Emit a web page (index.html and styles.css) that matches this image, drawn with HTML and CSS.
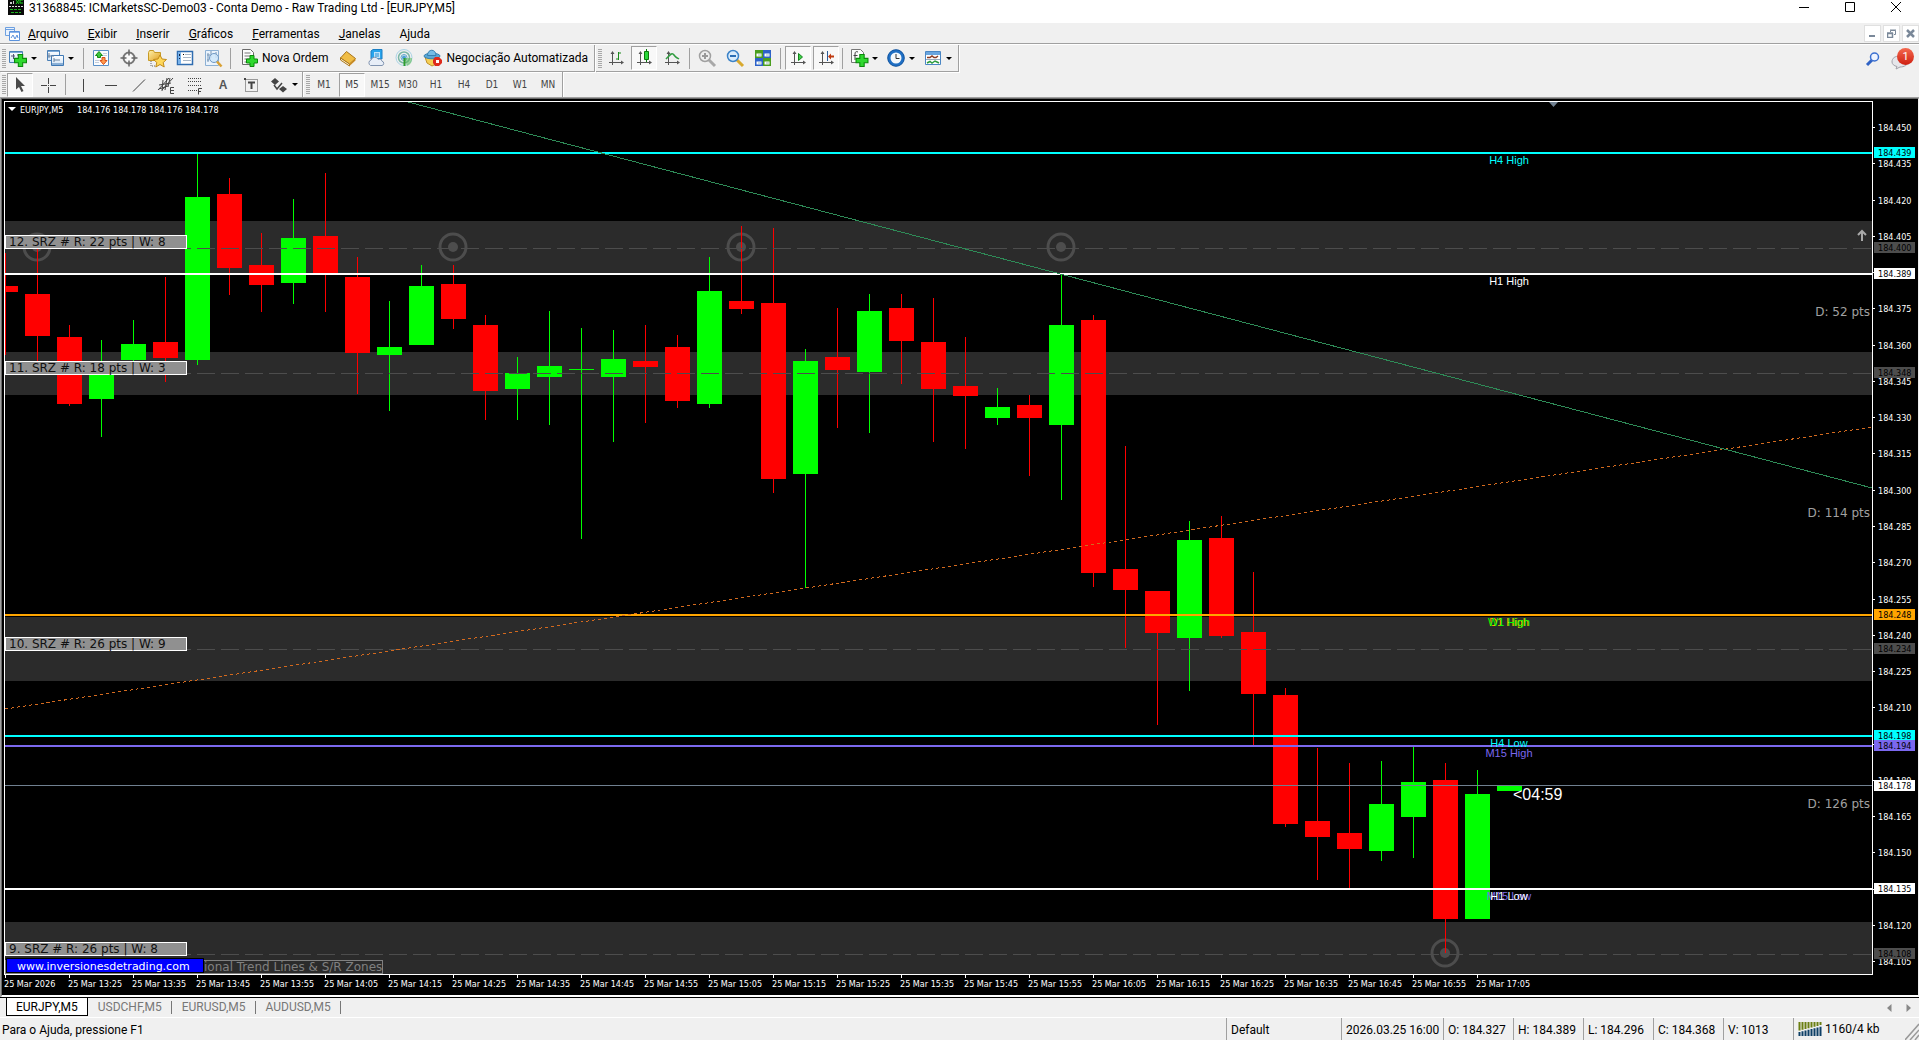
FILE: index.html
```html
<!DOCTYPE html>
<html lang="pt">
<head>
<meta charset="utf-8">
<title>31368845: ICMarketsSC-Demo03 - Conta Demo - Raw Trading Ltd - [EURJPY,M5]</title>
<link rel="stylesheet" href="styles.css">
</head>
<body>
<svg class="defs" width="0" height="0" aria-hidden="true">
  <symbol id="plus" viewBox="0 0 12 12"><path d="M4 .5h4V4h3.500v4H8v3.500H4V8H.5V4H4z" fill="#2fd82f" stroke="#0b8a0b"/></symbol>
  <symbol id="axes" viewBox="0 0 20 20"><path d="M6.500 4v13M3 14.500h14" stroke="#555" fill="none"/><path d="M4.500 6l2-3 2 3zM15 12.500l3 2-3 2z" fill="#555"/></symbol>
  <linearGradient id="win" x1="0" y1="0" x2="0" y2="1"><stop offset="0" stop-color="#fff"/><stop offset="1" stop-color="#cfe3f7"/></linearGradient>
  <linearGradient id="gold" x1="0" y1="0" x2="1" y2="1"><stop offset="0" stop-color="#fff0a8"/><stop offset="1" stop-color="#e0a020"/></linearGradient>
</svg>

<header class="titlebar">
  <svg class="app-icon" width="16" height="15" viewBox="0 0 16 15"><path fill="#0a0a0a" d="M0 0h16v15H0z"/><path d="M2 4V2h2v2zM5 4V1h1v3z" fill="#ccc"/><path d="M8 0l3 4M11 0L8 4M15 0h-3v3h3" stroke="#19d419" fill="none"/><path d="M1 6.500h14" stroke="#ddd" stroke-dasharray="2 1"/><path d="M2 9.500h12M3 12.500h10" stroke="#1fb51f" stroke-dasharray="3 1"/></svg>
  <span class="title">31368845: ICMarketsSC-Demo03 - Conta Demo - Raw Trading Ltd - [EURJPY,M5]</span>
  <div class="window-controls">
    <button aria-label="Minimizar"><svg width="12" height="12"><path d="M1 7.500h10" stroke="#000"/></svg></button>
    <button aria-label="Maximizar"><svg width="12" height="12"><path d="M1.500 2.500h9v9h-9z" fill="none" stroke="#000"/></svg></button>
    <button aria-label="Fechar"><svg width="12" height="12"><path d="M1 2l10 10M11 2L1 12" stroke="#000"/></svg></button>
  </div>
</header>

<nav class="menubar">
  <svg class="mdi-icon" width="15" height="14" viewBox="0 0 15 14"><path d="M.5.5h9v8h-9z" fill="#e9f2fd" stroke="#6ea0e0"/><path d="M1 2.500h8" stroke="#6ea0e0"/><path d="M4.500 4.500h10v9h-10z" fill="#fff" stroke="#5b92dc"/><path d="M5 5.500h9" stroke="#8db6ec"/><path d="M6 11l2-3 2 4 2-4 1 3" fill="none" stroke="#5b92dc"/></svg>
  <button><u>A</u>rquivo</button><button><u>E</u>xibir</button><button><u>I</u>nserir</button><button><u>G</u>ráficos</button><button><u>F</u>erramentas</button><button><u>J</u>anelas</button><button>Ajuda</button>
  <div class="mdi-controls">
    <button aria-label="Minimizar gráfico"><svg width="9" height="9"><path d="M1 6h6v2H1z" fill="#7a8899"/></svg></button>
    <button aria-label="Restaurar gráfico"><svg width="9" height="9"><path d="M3.500 3V1.500h5v4H7M3 1h6" fill="none" stroke="#7a8899"/><path d="M.5 4.500h5v4h-5zM0 4h6" fill="none" stroke="#7a8899" stroke-width="1.500"/></svg></button>
    <button aria-label="Fechar gráfico"><svg width="9" height="9"><path d="M1 1l7 7M8 1L1 8" stroke="#7a8899" stroke-width="2.500"/></svg></button>
  </div>
</nav>

<div class="toolbar">
  <div class="group">
    <span class="grip"></span>
    <button class="drop" aria-label="Novo gráfico"><svg width="20" height="20" viewBox="0 0 20 20"><path d="M1.500 3.500h13v11h-13z" fill="url(#win)" stroke="#4a7fb5"/><path d="M2 4.500h12" stroke="#7aa9d8"/><path d="M3 8h4M5.500 6v5M9 7h4" stroke="#557"/><use href="#plus" x="6" y="6" width="13" height="13"/></svg></button>
    <button class="drop" aria-label="Perfis"><svg width="20" height="20" viewBox="0 0 20 20"><path d="M2.500 2.500h12v10h-12z" fill="url(#win)" stroke="#4a7fb5"/><path d="M3 3.500h11" stroke="#7aa9d8"/><path d="M6.500 7.500h12v10h-12z" fill="url(#win)" stroke="#3f78b4"/><path d="M4 10V5M3 8h6M9 12h6M9 10v4" stroke="#68809c"/><path d="M7 16h11" stroke="#3f78b4"/></svg></button>
    <span class="sep"></span>
    <button aria-label="Observação do mercado"><svg width="20" height="20" viewBox="0 0 20 20"><path d="M2.500 2.500h15v15h-15z" fill="#fbfcfe" stroke="#5a90c8"/><path d="M8 3.500l3.500 4H9.500v2h-3v-2H4.500z" fill="#3cc63c" stroke="#128a12"/><path d="M12.500 16.500L9 12.500h2v-3h3v3h2z" fill="#ff9a4d" stroke="#d8501a"/><path d="M4 12.500h4M4 14.500h4M12 5.500h4M12 7.500h4" stroke="#c3cddb"/></svg></button>
    <button aria-label="Janela de dados"><svg width="20" height="20" viewBox="0 0 20 20"><circle cx="10" cy="10" r="5.500" fill="#fafafa" stroke="#777" stroke-width="2"/><path d="M10 1.500v6M10 12.500v6M1.500 10h6M12.500 10h6" stroke="#666" stroke-width="1.500"/></svg></button>
    <button aria-label="Navegador"><svg width="20" height="20" viewBox="0 0 20 20"><path d="M1.500 4.500l1-2h4l1 2h6v8h-12z" fill="url(#gold)" stroke="#c79a25"/><path d="M4 13v5h5" fill="none" stroke="#666" stroke-dasharray="1 1"/><path d="M13 7l2 4 4.500.5-3.300 3 1 4.500L13 16.500 8.800 19l1-4.500-3.300-3L11 11z" fill="#ffd85a" stroke="#c28a18"/></svg></button>
    <button aria-label="Terminal"><svg width="20" height="20" viewBox="0 0 20 20"><path d="M2.500 3.500h15v13h-15z" fill="#fff" stroke="#2f6cb0" stroke-width="1.500"/><path d="M3 4h3v12H3z" fill="#7ab3ea"/><path d="M4 6h1v2H4zM4 10h1v1H4z" fill="#124"/><path d="M8 6.500h1M10 6.500h6M8 9.500h8M8 12.500h8" stroke="#a8b6c6"/><path d="M8 6h1v1H8z" fill="#000"/></svg></button>
    <button aria-label="Testador de estratégia"><svg width="20" height="20" viewBox="0 0 20 20"><path d="M2.500 2.500h13v15h-13z" fill="#eaf3fc" stroke="#8cb0d4"/><path d="M5 5v9M8 3v7M13 4v6M4 7h3M4 12h2" stroke="#7795b4"/><circle cx="11" cy="10" r="4.500" fill="#cfe6fa" fill-opacity=".85" stroke="#6f98c4"/><path d="M14 13.500l4.500 5" stroke="#d9a033" stroke-width="2.500"/></svg></button>
    <span class="sep"></span>
    <button class="text"><svg width="20" height="20" viewBox="0 0 20 20"><path d="M4.500 1.500h8l3 3v12h-11z" fill="#fcfcfc" stroke="#6b6b6b"/><path d="M6.500 5h6M6.500 8h6M6.500 11h6M6.500 14h3" stroke="#777"/><use href="#plus" x="8" y="7" width="12" height="12"/></svg>Nova Ordem</button>
    <button aria-label="MetaEditor"><svg width="20" height="20" viewBox="0 0 20 20"><path d="M8.500 3.500l9 7-6 5.500-9-6z" fill="#f0bd45" stroke="#a8741a"/><path d="M2.500 10l9 6v2l-9-6z" fill="#fff3cf" stroke="#a8741a"/><path d="M11.500 16l6-5.500v2l-6 5.500z" fill="#c98a20"/></svg></button>
    <button aria-label="Nuvem"><svg width="20" height="20" viewBox="0 0 20 20"><path d="M5 3l2-1.500h9V11H5z" fill="#28a4ec" stroke="#1c7fc4"/><path d="M8 4h6v6H8z" fill="#bfe4fb"/><path d="M9 6h4M9 8h4" stroke="#2a8fd0"/><path d="M4.500 17.500a3 3 0 0 1 .5-5.500 3.800 3.800 0 0 1 7-.8 3 3 0 0 1 4 2 2.200 2.200 0 0 1 0 4.300z" fill="#e8eef7" stroke="#8194b0"/></svg></button>
    <button aria-label="Sinais"><svg width="20" height="20" viewBox="0 0 20 20"><g fill="none"><circle cx="10" cy="9.500" r="8" stroke="#a9d3e6"/><circle cx="10" cy="9.500" r="5.500" stroke="#7ab6a6" stroke-width="1.500"/><circle cx="10" cy="9.500" r="3" stroke="#5da7c9"/></g><circle cx="10" cy="9.500" r="2" fill="#4a9fd6"/><path d="M10 10l3 8a8 8 0 0 0 5-8z" fill="#55b955" opacity=".55"/><path d="M10.500 10v8" stroke="#2f9c2f" stroke-width="2"/></svg></button>
    <button class="text"><svg width="20" height="20" viewBox="0 0 20 20"><path d="M3 9h14l-3 7-4 2-5-3z" fill="#f6cf55" stroke="#c0922a"/><ellipse cx="10" cy="8" rx="8" ry="2.800" fill="#5aa6d6" stroke="#3780b0"/><path d="M5.500 7.500c0-7 8.500-7 8.500 0z" fill="#76bce6" stroke="#3780b0"/><path d="M13 9h4l3 3v3l-3 3h-4l-2-3v-3z" fill="#de2b1c"/><path d="M14 12h3v3h-3z" fill="#fff"/></svg>Negociação Automatizada</button>
  </div>
  <div class="group">
    <span class="grip"></span>
    <button aria-label="Gráfico de barras"><svg width="20" height="20" viewBox="0 0 20 20"><use href="#axes" width="20" height="20"/><path d="M12.500 4v8M13 5h2M10 11h2" stroke="#1b8a1b" fill="none"/></svg></button>
    <button class="on" aria-label="Candles"><svg width="20" height="20" viewBox="0 0 20 20"><use href="#axes" width="20" height="20"/><path d="M12.500 1v13" stroke="#0a7a0a"/><path d="M10.500 3.500h4v8h-4z" fill="#2ad83a" stroke="#0a7a0a"/></svg></button>
    <button aria-label="Gráfico de linha"><svg width="20" height="20" viewBox="0 0 20 20"><use href="#axes" width="20" height="20"/><path d="M4 11c4-4 6-7 8-4s2 2 5 4" stroke="#2f9c3f" fill="none" stroke-width="1.500"/></svg></button>
    <span class="sep"></span>
    <button aria-label="Ampliar"><svg width="20" height="20" viewBox="0 0 20 20"><path d="M12 12l6 6" stroke="#a8a8a8" stroke-width="3"/><circle cx="8" cy="8" r="5.500" fill="#eee" stroke="#a0a0a0" stroke-width="1.500"/><path d="M8 5v6M5 8h6" stroke="#999" stroke-width="2"/></svg></button>
    <button aria-label="Reduzir"><svg width="20" height="20" viewBox="0 0 20 20"><path d="M12 12l6 6" stroke="#d8a92e" stroke-width="3"/><circle cx="8" cy="8" r="5.500" fill="#d9ecfc" stroke="#3c83c8" stroke-width="1.500"/><path d="M5 8h6" stroke="#2a6db4" stroke-width="2"/></svg></button>
    <button aria-label="Lado a lado"><svg width="20" height="20" viewBox="0 0 20 20"><path d="M2 2h8v8H2zM10 10h8v8h-8z" fill="#4a9e1f"/><path d="M10 2h8v8h-8zM2 10h8v8H2z" fill="#2d62c8"/><path d="M3.500 5.500h5v3h-5zM11.500 5.500h5v3h-5zM3.500 13.500h5v3h-5zM11.500 13.500h5v3h-5z" fill="#fff"/><path d="M5 7h3M13 7h3M5 15h3M13 15h3" stroke="#9bb"/></svg></button>
    <span class="sep"></span>
    <button class="on" aria-label="Rolagem automática"><svg width="20" height="20" viewBox="0 0 20 20"><use href="#axes" width="20" height="20"/><path d="M10.500 5.500l4 3.500-4 3.500z" fill="#3fd04a" stroke="#14861c"/></svg></button>
    <button class="on" aria-label="Deslocar gráfico"><svg width="20" height="20" viewBox="0 0 20 20"><use href="#axes" width="20" height="20"/><path d="M11.500 3v10" stroke="#2b5c9a"/><path d="M12 8.500l3-3v2h3v2h-3v2z" fill="#c03a10"/></svg></button>
    <span class="sep wide"></span>
    <button class="drop" aria-label="Indicadores"><svg width="20" height="20" viewBox="0 0 20 20"><path d="M2.500 1.500h9l3 3v10h-12z" fill="#fcfcfc" stroke="#777"/><path d="M9 4c-2-1-3 0-3 2v6M4.500 7.500h4" fill="none" stroke="#444"/><use href="#plus" x="6" y="6" width="14" height="13"/></svg></button>
    <button class="drop" aria-label="Períodos"><svg width="20" height="20" viewBox="0 0 20 20"><circle cx="10" cy="10" r="7" fill="#f4f8fc" stroke="#1f6fc4" stroke-width="3"/><circle cx="10" cy="10" r="8.300" fill="none" stroke="#0d4c96" stroke-width=".8"/><path d="M10 6v4.500h3.500" fill="none" stroke="#333"/></svg></button>
    <button class="drop" aria-label="Modelos"><svg width="20" height="20" viewBox="0 0 20 20"><path d="M2.500 3.500h15v13h-15z" fill="#fff" stroke="#4a86c4"/><path d="M3 4h14v3H3z" fill="#6aa5de"/><path d="M4 9.500h3l2-1.500 2 1.500h2l2-1.500" fill="none" stroke="#8a3a20" stroke-width="1.500"/><path d="M3 11.500h14" stroke="#9ab"/><path d="M4 15l3-1.500 2 1.500 3-2 2 1 2 1" fill="none" stroke="#2f9c3f" stroke-width="1.500"/></svg></button>
  </div>
  <div class="toolbar-end">
    <button aria-label="Pesquisar"><svg width="16" height="16" viewBox="0 0 16 16"><path d="M7 9l-5 5" stroke="#2f62c4" stroke-width="3"/><circle cx="9.500" cy="6" r="4" fill="#eef4ff" stroke="#3b6fd0" stroke-width="1.500"/></svg></button>
    <button class="chat" aria-label="Mensagens"><svg width="26" height="24" viewBox="0 0 26 24"><path d="M3 15c0-4 3-6 8-6s8 3 8 6-4 5-8 5l-4 2 1-2.500C5 19 3 17 3 15z" fill="#e6e6ea" stroke="#a2a2aa"/></svg><span class="badge">1</span></button>
  </div>
</div>

<div class="toolbar">
  <div class="group">
    <span class="grip"></span>
    <button class="on" aria-label="Cursor"><svg width="20" height="20" viewBox="0 0 20 20"><path d="M6 2v12.500l3-2.500 2.500 5 2-1-2.500-5h4z" fill="#4a4a4a"/></svg></button>
    <button aria-label="Cruz"><svg width="20" height="20" viewBox="0 0 20 20"><path d="M10.500 3v6M10.500 12v6M3 10.500h6M12 10.500h6M10 10.500h1" stroke="#444"/></svg></button>
    <span class="sep wider"></span>
    <button aria-label="Linha vertical"><svg width="20" height="20"><path d="M10.500 4v13" stroke="#444"/></svg></button>
    <button aria-label="Linha horizontal"><svg width="20" height="20"><path d="M4 10.500h12" stroke="#444"/></svg></button>
    <button aria-label="Linha de tendência"><svg width="20" height="20"><path d="M4 16.500L16 4.500" stroke="#444"/></svg></button>
    <button aria-label="Canal"><svg width="20" height="20" viewBox="0 0 20 20"><path d="M1 15L12 3M5 15L16 3M2 10l12-2M2 14l9-3M6 5l-1 11M10 3L8 15M13 3l-2 9" stroke="#444" fill="none"/><path d="M17 12.500h-3.500v6H17M13.500 15.500H17" fill="none" stroke="#444"/></svg></button>
    <button aria-label="Fibonacci"><svg width="20" height="20" viewBox="0 0 20 20"><path d="M3 3.500h14M3 6.500h14M3 10.500h14M3 15.500h9" stroke="#444" stroke-dasharray="1 1"/><path d="M17 13.500h-3.500v6M13.500 16.500H16" fill="none" stroke="#444"/></svg></button>
    <button class="glyph">A</button>
    <button aria-label="Etiqueta de texto"><svg width="20" height="20" viewBox="0 0 20 20"><path d="M4.500 4.500h12v12h-12z" fill="none" stroke="#444" stroke-dasharray="1 1"/><path d="M7 7.500h7M10.500 7v7" stroke="#444" stroke-width="2"/><path d="M3 3h2v2H3z" fill="#444"/></svg></button>
    <button class="drop arrows" aria-label="Setas"><svg width="20" height="20" viewBox="0 0 20 20"><path d="M6 3l4 3.500-4 3.500-4-3.500zM14 11l4 3-4 3.500-4-3.500z" fill="#444"/><path d="M5 10l3 4 5-6" fill="none" stroke="#444" stroke-width="1.500"/></svg></button>
  </div>
  <div class="group frames">
    <span class="grip"></span>
    <button>M1</button><button class="on">M5</button><button>M15</button><button>M30</button><button>H1</button><button>H4</button><button>D1</button><button>W1</button><button>MN</button>
  </div>
</div>

<main class="chart">
  <svg class="plot" id="plot" role="img" aria-label="EURJPY, M5"></svg>
  <svg class="price-axis" id="price-axis"></svg>
  <svg class="time-axis" id="time-axis"></svg>
</main>

<div class="tabs">
  <button class="active">EURJPY,M5</button><button>USDCHF,M5</button><button>EURUSD,M5</button><button>AUDUSD,M5</button>
  <div class="tab-scroll">
    <button aria-label="Anterior"><svg width="5" height="8"><path d="M4.500 0v8L0 4z" fill="#888"/></svg></button>
    <button aria-label="Próximo"><svg width="5" height="8"><path d="M.5 0v8L5 4z" fill="#888"/></svg></button>
  </div>
</div>

<footer class="status">
  <span class="help">Para o Ajuda, pressione F1</span>
  <span class="cell profile">Default</span>
  <span class="cell date">2026.03.25 16:00</span>
  <span class="cell ohlc">O: 184.327</span>
  <span class="cell ohlc">H: 184.389</span>
  <span class="cell ohlc">L: 184.296</span>
  <span class="cell ohlc">C: 184.368</span>
  <span class="cell ohlc">V: 1013</span>
  <span class="cell net"><svg width="24" height="14" viewBox="0 0 24 18" preserveAspectRatio="none"><path d="M1.500 0v11M4.500 0v10M7.500 0v9M10.500 0v8M13.500 0v7M16.500 0v6M19.500 0v5M22.500 0v4" stroke="#6b7f12" stroke-width="2"/><path d="M1.500 13v5M4.500 12v6M7.500 11v7M10.500 10v8M13.500 9v9M16.500 8v10M19.500 7v11M22.500 6v12" stroke="#0d3f66" stroke-width="2"/></svg>1160/4 kb</span>
  <svg class="size-grip" width="14" height="20" viewBox="0 0 14 20"><path d="M0 20L14 4M5 20l9-10M10 20l4-5" stroke="#999" stroke-width="1.500"/></svg>
</footer>
<script src="chart.js"></script>
</body>
</html>
```

FILE: styles.css
```css
* { box-sizing: border-box; }

body {
  margin: 0;
  height: 100vh;
  display: flex;
  flex-direction: column;
  overflow: hidden;
  background: #f0f0f0;
  color: #000;
  font: 12px/16px Roboto, "Open Sans", sans-serif;
}

button {
  margin: 0;
  padding: 0;
  border: 0;
  background: none;
  color: inherit;
  font: inherit;
  white-space: nowrap;
}

svg { display: block; flex: none; }
.defs { position: absolute; }

/* title bar */
.titlebar {
  display: flex;
  align-items: flex-start;
  height: 23px;
  padding-left: 8px;
  background: #fff;
}
.title { margin-left: 5px; }
.window-controls { display: flex; margin-left: auto; }
.window-controls button { width: 46px; display: flex; justify-content: center; }

/* menu bar */
.menubar {
  display: flex;
  align-items: center;
  gap: 19px;
  height: 22px;
  padding-left: 5px;
  border-bottom: 1px solid #fff;
  box-shadow: inset 0 -1px #a0a0a0;
}
.mdi-icon { margin-right: -11px; }
.mdi-controls { display: flex; gap: 2px; margin-left: auto; }
.mdi-controls button {
  width: 17px;
  height: 17px;
  display: grid;
  place-items: center;
  background: #fff;
  border: 1px solid #e0e0e0;
}

/* toolbars */
.toolbar { display: flex; height: 27px; }
.toolbar + .toolbar { height: 25px; }
.toolbar + .toolbar .group { border-bottom: 0; }
.group {
  display: flex;
  align-items: center;
  padding-left: 2px;
  border-right: 1px solid #a0a0a0;
  border-bottom: 1px solid #a0a0a0;
  box-shadow: 1px 1px #fff;
  margin-right: 1px;
}
.grip {
  width: 4px;
  height: 19px;
  background: repeating-linear-gradient(#a8a8a8 0 1px, #f0f0f0 1px 2px);
}
.group button {
  width: 28px;
  height: 24px;
  display: flex;
  align-items: center;
  justify-content: center;
}
.group .drop {
  width: 37px;
  justify-content: flex-start;
  padding-left: 2px;
}
.group .arrows { padding-left: 4px; }
.drop::after {
  content: "";
  margin-left: 3px;
  border: 3px solid transparent;
  border-top-color: #000;
  border-bottom: 0;
}
.group .text { width: auto; gap: 4px; padding: 0 6px 0 4px; }
.group .on {
  width: 26px;
  margin: 0 1px;
  background: #f8f8f8;
  border: 1px solid #a0a0a0;
  border-right-color: #fff;
  border-bottom-color: #fff;
}
.sep {
  width: 1px;
  height: 21px;
  margin: 0 3px;
  background: #a0a0a0;
}
.sep.wide { margin: 0 4px 0 2px; }
.toolbar-end {
  display: flex;
  align-items: center;
  gap: 8px;
  margin-left: auto;
  padding-right: 4px;
}
.chat { position: relative; }
.badge {
  position: absolute;
  top: 1px;
  right: 1px;
  width: 17px;
  height: 17px;
  border-radius: 50%;
  background: linear-gradient(#f4694f, #cf1f10);
  color: #fff;
  font-size: 11px;
  line-height: 17px;
}
.group .glyph { font: bold 12px "Liberation Sans", sans-serif; color: #555; }
.frames button { font: 10px "DejaVu Sans Condensed", "DejaVu Sans", sans-serif; color: #444; }

/* chart window */
.chart {
  flex: 1;
  min-height: 0;
  display: grid;
  grid-template-columns: 1fr 45px;
  grid-template-rows: 1fr 20px;
  padding: 2px 0 0 2px;
  background: #000;
  border-style: solid;
  border-color: #696969 #f0f0f0 #fff #696969;
  border-width: 1px 1px 2px 1px;
  outline: 1px solid #a0a0a0;
  margin: 1px 0 0 1px;
}
.chart svg {
  width: 100%;
  height: 100%;
  overflow: hidden;
  font: 9px "DejaVu Sans Condensed", "DejaVu Sans", sans-serif;
}
.chart .plot { border: 1px solid #fff; }
.chart .time-axis { grid-column: 1 / -1; }
.chart .verdana { font: 12px "DejaVu Sans", sans-serif; }
.chart .site { font: 11px "DejaVu Sans", sans-serif; }
.chart .level { font: 11px "Liberation Sans", Arial, sans-serif; text-anchor: middle; }
.chart .timer { font: 16px "Liberation Sans", Arial, sans-serif; }

/* chart tabs */
.tabs {
  display: flex;
  height: 21px;
  padding-left: 6px;
  border-top: 1px solid #000;
  border-bottom: 1px solid #fff;
  color: #777;
}
.tabs > button {
  position: relative;
  height: 18px;
  padding: 0 10px;
}
.tabs > button:not(.active)::after {
  content: "";
  position: absolute;
  right: 0;
  top: 3px;
  height: 13px;
  border-right: 1px solid #777;
}
.tabs > .active {
  padding: 0 9px;
  background: #fff;
  color: #000;
  border: 1px solid #000;
  border-top: 0;
}
.tab-scroll { display: flex; align-items: center; gap: 14px; margin-left: auto; padding-right: 8px; }

/* status bar */
.status {
  display: flex;
  height: 22px;
  line-height: 24px;
  position: relative;
  white-space: nowrap;
}
.help { flex: 1; padding-left: 2px; }
.cell { padding-left: 5px; box-shadow: inset 1px 0 #a0a0a0; }
.profile { width: 115px; }
.date { width: 102px; }
.ohlc { width: 70px; }
.net { width: 126px; display: flex; align-items: center; gap: 3px; }
.size-grip { position: absolute; right: 0; bottom: 0; }
```

FILE: chart.js
```js
// Vertical values are measured from the top of the window; each canvas subtracts its own origin.
const NS = 'http://www.w3.org/2000/svg';
const STEP = 32, BODY = 25, TOP = 102, UP = '#00ff00', DOWN = '#ff0000';
const plot = document.getElementById('plot');
const prices = document.getElementById('price-axis');
const times = document.getElementById('time-axis');

function add(parent, tag, attrs, text) {
  const el = document.createElementNS(NS, tag);
  for (const k in attrs) el.setAttribute(k, attrs[k]);
  if (text !== undefined) el.textContent = text;
  parent.appendChild(el);
  return el;
}
const rect = (p, x, y, w, h, fill, extra) => add(p, 'rect', { x, y, width: w, height: h, fill, ...extra });
const text = (p, x, y, s, fill, extra) => add(p, 'text', { x, y, fill, ...extra }, s);

// support / resistance zones: top, bottom
[[221, 273], [352, 395], [617, 681], [922, 974]].forEach(([a, b]) => rect(plot, 0, a - TOP, '100%', b - a, '#2b2b2b'));

// pivot rings
[[37, 247], [453, 247], [741, 247], [1061, 247], [1445, 953]].forEach(([x, y]) => {
  add(plot, 'circle', { cx: x - 5, cy: y - TOP, r: 13, fill: 'none', stroke: '#4d4d4d', 'stroke-width': 3 });
  add(plot, 'circle', { cx: x - 5, cy: y - TOP, r: 5, fill: '#4d4d4d' });
});

// candles: high, body top, body bottom, low, rising
const candles = [
  [253,286,292,355,0],[240,294,336,365,0],[325,337,404,406,0],[340,374,399,437,1],[320,344,360,363,1],[277,342,358,382,0],
  [154,197,360,365,1],[178,194,268,295,0],[233,265,285,312,0],[199,238,283,304,1],[173,236,273,312,0],[257,277,353,394,0],
  [301,347,355,411,1],[265,286,345,345,1],[265,284,319,329,0],[315,325,391,420,0],[357,373,389,420,1],[311,366,377,425,1],
  [328,369,370,539,1],[330,359,377,442,1],[325,361,367,423,0],[335,347,401,408,0],[257,291,404,408,1],[226,301,309,314,0],
  [228,303,479,493,0],[349,361,474,588,1],[308,357,370,428,0],[294,311,372,433,1],[294,308,341,384,0],[298,342,389,442,0],
  [337,386,396,449,0],[388,407,418,425,1],[395,405,418,476,0],[275,325,425,500,1],[315,320,573,587,0],[446,569,590,648,0],
  [591,591,633,725,0],[521,540,638,691,1],[516,538,636,638,0],[572,632,694,745,0],[688,695,824,827,0],[748,821,837,880,0],
  [763,833,849,888,0],[761,804,851,861,1],[747,782,817,858,1],[763,780,919,953,0],[770,794,919,919,1],[785,785,791,791,1]
];
candles.forEach(([hi, a, b, lo, up], i) => {
  const c = up ? UP : DOWN;
  rect(plot, i * STEP, hi - TOP, 1, lo - hi, c);
  rect(plot, i * STEP - 12, a - TOP, BODY, b - a, c);
});

// middle of each zone
[248, 373, 649, 954].forEach(y => add(plot, 'line', { x1: 0, x2: '100%', y1: y - TOP + 0.5, y2: y - TOP + 0.5, stroke: '#4d4d4d', 'stroke-dasharray': '18 6' }));

// horizontal levels
rect(plot, 0, 785 - TOP, '100%', 1, '#708090');
[[152, '#00ffff'], [273, '#ffffff'], [614, '#ffa500'], [735, '#00ffff'], [745, '#7b68ee'], [888, '#ffffff']]
  .forEach(([y, c]) => rect(plot, 0, y - TOP, '100%', 2, c));

// trend lines
add(plot, 'line', { x1: 403, y1: 0, x2: 1867, y2: 386, stroke: '#2e8b57', 'shape-rendering': 'crispEdges' });
add(plot, 'line', { x1: 0, y1: 607, x2: 1867, y2: 325, stroke: '#d2691e', 'stroke-dasharray': '3 3', 'shape-rendering': 'crispEdges' });

// level names
[['H4 High', 164, '#00ffff'], ['H1 High', 285, '#ffffff'], ['D1 High', 626, '#ffa500'], ['W1 High', 626, '#00ff00'],
 ['H4 Low', 747, '#00ffff'], ['M15 High', 757, '#7b68ee'], ['M15 Low', 900, '#7b68ee'], ['H1 Low', 900, '#ffffff']]
  .forEach(([s, y, c]) => text(plot, 1504, y - TOP, s, c, { class: 'level' }));
text(plot, 1508, 800 - TOP, '<04:59', '#ffffff', { class: 'timer' });

// distances between levels, kept at the right edge
const right = add(plot, 'svg', { x: '100%', style: 'overflow: visible' });
[['D: 52 pts', 316], ['D: 114 pts', 517], ['D: 126 pts', 808]]
  .forEach(([s, y]) => text(right, -2, y - TOP, s, '#a0a0a0', { class: 'verdana', 'text-anchor': 'end' }));
add(right, 'path', { d: 'M-10 139v-9M-14 133l4-4 4 4', stroke: '#a9a9a9', 'stroke-width': 2, fill: 'none' });

// zone captions
[['12. SRZ # R: 22 pts | W: 8', 235], ['11. SRZ # R: 18 pts | W: 3', 361], ['10. SRZ # R: 26 pts | W: 9', 637], ['9. SRZ # R: 26 pts | W: 8', 942]]
  .forEach(([s, y]) => {
    rect(plot, 0.5, y - TOP + 0.5, 181, 13, '#909090', { stroke: '#fff' });
    text(plot, 4, y - TOP + 11, s, '#111', { class: 'verdana' });
  });
rect(plot, 0.5, 960 - TOP + 0.5, 377, 13, '#2b2b2b', { stroke: '#808080' });
text(plot, 199, 971 - TOP, 'ional Trend Lines & S/R Zones', '#808080', { class: 'verdana' });
rect(plot, 1.5, 958 - TOP + 0.5, 197, 14, '#0000ff', { stroke: '#000' });
text(plot, 12, 970 - TOP, 'www.inversionesdetrading.com', '#fff', { class: 'site' });

// header and shift marker
add(plot, 'path', { d: 'M3 5h8l-4 4z', fill: '#fff' });
text(plot, 15, 11, 'EURJPY,M5', '#fff');
text(plot, 72, 11, '184.176 184.178 184.176 184.178', '#fff');
add(plot, 'path', { d: 'M1544 0h9l-4.5 5z', fill: '#708090' });

// price scale
for (let i = 0; i < 24; i++) {
  const y = Math.round(127 + i * 36.27) - 101;
  rect(prices, 0, y, 2, 1, '#fff');
  text(prices, 5, y + 4, (184.45 - i * 0.015).toFixed(3), '#fff');
}
[['184.439', 147, '#00ffff'], ['184.400', 242, '#4d4d4d'], ['184.389', 268, '#ffffff'], ['184.348', 367, '#4d4d4d'],
 ['184.248', 609, '#ffa500'], ['184.234', 643, '#4d4d4d'], ['184.198', 730, '#00ffff'], ['184.194', 740, '#7b68ee'],
 ['184.178', 780, '#ffffff'], ['184.135', 883, '#ffffff'], ['184.108', 948, '#4d4d4d']].forEach(([s, y, c]) => {
  rect(prices, 1, y - 101, 41, 11, c);
  text(prices, 5, y - 101 + 9, s, '#000');
});

// time scale, one label for every second candle
for (let k = 0; k < 24; k++) {
  const m = 13 * 60 + 15 + k * 10;
  const s = k ? `${Math.floor(m / 60)}:${String(m % 60).padStart(2, '0')}` : '2026';
  rect(times, 1 + k * 64, 0, 1, 3, '#fff');
  text(times, k * 64, 12, '25 Mar ' + s, '#fff');
}
```
